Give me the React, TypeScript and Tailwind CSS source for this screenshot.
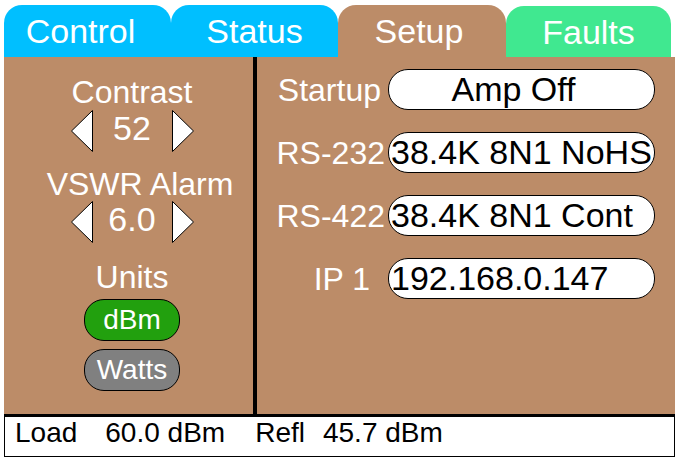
import React from 'react'

const BROWN = 'bg-[#bc8c68]'

const Arrow = ({ dir }: { dir: 'left' | 'right' }) => (
    <svg width="22" height="42" viewBox="0 0 22 42" className="shrink-0">
        {dir === 'left' ? (
            <polygon points="21.5,0.5 0.5,21 21.5,41.5" fill="#fff" stroke="#000" strokeWidth="1" />
        ) : (
            <polygon points="0.5,0.5 21.5,21 0.5,41.5" fill="#fff" stroke="#000" strokeWidth="1" />
        )}
    </svg>
)

const Stepper = ({ value }: { value: string }) => (
    <div className="flex items-start h-[42px]">
        <Arrow dir="left" />
        <span className="w-[79px] text-center text-[34px] leading-[36px] text-white">{value}</span>
        <Arrow dir="right" />
    </div>
)

type Row = { label: string, value: string, center?: boolean, labelPad: string }

const rows: Row[] = [
    { label: 'Startup', value: 'Amp Off', center: true, labelPad: 'pr-[4px]' },
    { label: 'RS-232', value: '38.4K 8N1 NoHS', labelPad: 'pr-0' },
    { label: 'RS-422', value: '38.4K 8N1 Cont', labelPad: 'pr-0' },
    { label: 'IP 1', value: '192.168.0.147', labelPad: 'pr-[15px]' },
]

const tabs = [
    { name: 'Control', cls: 'w-[167px] bg-[#00bfff] pr-[14px]' },
    { name: 'Status', cls: 'w-[167px] bg-[#00bfff]' },
    { name: 'Setup', cls: `w-[168px] ${BROWN} pr-[6px]` },
    { name: 'Faults', cls: 'w-[165px] bg-[#40e890] mt-[1px]' },
]

export default function App() {
    return (
        <div className="w-[680px] h-[462px] bg-white overflow-hidden font-['Liberation_Sans',Arial,sans-serif]">
            <div className="ml-[4px] pt-[5px] w-[671px]">
                {/* tab strip */}
                <div className="flex h-[52px]">
                    {tabs.map((t) => (
                        <div
                            key={t.name}
                            className={`${t.cls} rounded-t-[18px] text-center text-white text-[34px] leading-[52px]`}>
                            {t.name}
                        </div>
                    ))}
                </div>

                {/* body */}
                <div className={`flex h-[357px] ${BROWN}`}>
                    <div className="w-[249px] pl-[7px] pt-[18px] flex flex-col items-center text-white">
                        <div className="text-[32px] leading-[34px]">Contrast</div>
                        <div className="mt-[1px]"><Stepper value="52" /></div>
                        <div className="mt-[15px] pl-[16px] text-[32px] leading-[34px]">VSWR Alarm</div>
                        <Stepper value="6.0" />
                        <div className="mt-[17px] text-[32px] leading-[34px]">Units</div>
                        <div className="mt-[5px] w-[96px] h-[42px] rounded-[20px] border border-black bg-[#22a00e] flex items-center justify-center text-[28px]">dBm</div>
                        <div className="mt-[8px] w-[96px] h-[42px] rounded-[20px] border border-black bg-[#808080] flex items-center justify-center text-[28px]">Watts</div>
                    </div>
                    <div className="w-[4px] bg-black"></div>
                    <div className="flex-1 pt-[12px] flex flex-col gap-[22px]">
                        {rows.map((r) => (
                            <div key={r.label} className="flex items-center h-[41px]">
                                <div className={`w-[128px] text-right text-white text-[32px] whitespace-nowrap ${r.labelPad}`}>{r.label}</div>
                                <div
                                    className={`ml-[3px] w-[267px] h-[41px] rounded-[20px] border border-black bg-white flex items-center text-black text-[34px] whitespace-nowrap overflow-hidden ${r.center ? 'justify-center pr-[16px]' : 'pl-[2px]'}`}>
                                    {r.value}
                                </div>
                            </div>
                        ))}
                    </div>
                </div>

                {/* readout bar */}
                <div className="h-[43px] border-t-[3px] border-x-[1.5px] border-b-[1.5px] border-black bg-white flex items-start text-black text-[28px] leading-[32px] pl-[10px] whitespace-nowrap">
                    <span>Load</span>
                    <span className="ml-[28px]">60.0 dBm</span>
                    <span className="ml-[30px]">Refl</span>
                    <span className="ml-[18px]">45.7 dBm</span>
                </div>
            </div>
        </div>
    )
}
